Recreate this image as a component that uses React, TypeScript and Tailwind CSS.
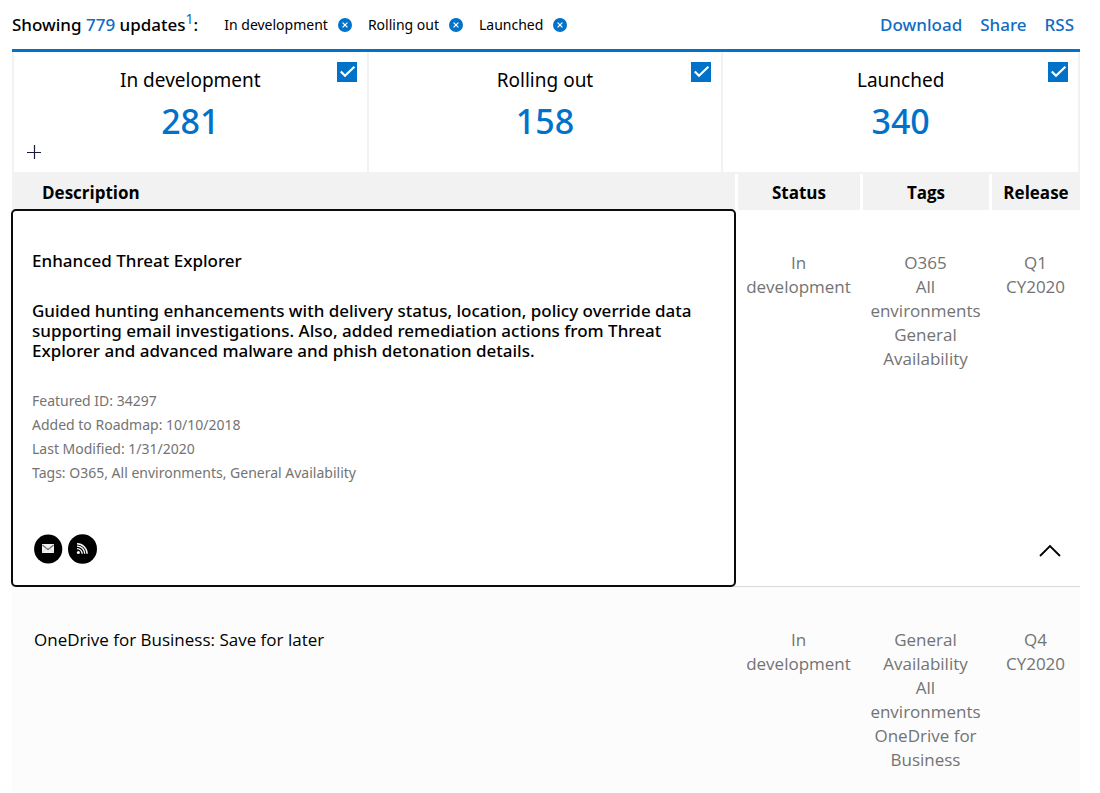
import { useState } from "react";

type Chip = { label: string; count: number; expandable?: boolean };

const statuses: Chip[] = [
  { label: "In development", count: 281, expandable: true },
  { label: "Rolling out", count: 158 },
  { label: "Launched", count: 340 },
];

function RemoveIcon() {
  return (
    <svg viewBox="0 0 14 14" className="size-3.5" aria-hidden="true">
      <circle cx="7" cy="7" r="7" fill="#0072c9" />
      <path d="M4.6 4.6 9.4 9.4M9.4 4.6 4.6 9.4" stroke="#fff" strokeWidth="1.3" />
    </svg>
  );
}

function MailIcon() {
  return (
    <svg viewBox="0 0 29 30" className="h-[30px] w-[29px]" aria-hidden="true">
      <ellipse cx="14.2" cy="15" rx="14.1" ry="14.4" fill="#000" />
      <rect x="8" y="10" width="12" height="9" fill="#f2f2f2" />
      <path d="m8.4 11 5.6 4.6 5.6-4.6" fill="none" stroke="#777" strokeWidth="1.3" />
      <path d="m8.4 18.6 3.6-4M19.6 18.6l-3.6-4" fill="none" stroke="#c4c4c4" strokeWidth=".6" />
    </svg>
  );
}

function FeedIcon() {
  return (
    <svg viewBox="0 0 29 30" className="h-[30px] w-[29px]" aria-hidden="true">
      <ellipse cx="14.5" cy="15" rx="14.5" ry="14.8" fill="#000" />
      <circle cx="10.4" cy="18.4" r="1.5" fill="#fff" />
      <path
        d="M9 14.6a5.2 5.2 0 0 1 5.2 5.2M9 12.1a7.7 7.7 0 0 1 7.7 7.7M9 9.7a10.1 10.1 0 0 1 10.1 10.1"
        fill="none"
        stroke="#fff"
        strokeWidth="1.4"
      />
    </svg>
  );
}

function StatusCard({ label, count, expandable }: Chip) {
  const [checked, setChecked] = useState(true);
  return (
    <div className="relative h-[120px] pt-4 text-center">
      <label className="block">
        <span className="font-['Noto_Sans','Open_Sans',sans-serif] text-[19px] leading-6">{label}</span>
        <input
          type="checkbox"
          checked={checked}
          onChange={() => setChecked(!checked)}
          className="absolute top-2.5 right-2.5 size-5 appearance-none border border-[#0072c9] checked:bg-[#0072c9]"
        />
        <svg
          viewBox="0 0 20 20"
          className="pointer-events-none absolute top-2.5 right-2.5 size-5"
          aria-hidden="true"
        >
          <path d="m3.8 9.4 4.2 4.4 9.4-9" fill="none" stroke="#fff" strokeWidth="2.2" />
        </svg>
      </label>
      <div className="mt-2 font-['Noto_Sans','Open_Sans',sans-serif] text-[34px] leading-10 font-medium text-[#0072c9]">
        {count}
      </div>
      {expandable && (
        <button type="button" aria-label="Expand" className="absolute bottom-3 left-3">
          <svg viewBox="0 0 16 16" className="size-4" aria-hidden="true">
            <path d="M1 8.5h14M8.5 1v14" stroke="#1a1a3a" strokeWidth="1.2" />
          </svg>
        </button>
      )}
    </div>
  );
}

function TagList({ tags }: { tags: string[] }) {
  return (
    <ul>
      {tags.map((t) => (
        <li key={t}>{t}</li>
      ))}
    </ul>
  );
}

const headCell = "border-l-[3px] border-white bg-[#f2f2f2] pt-0.5 text-center";
const infoCell =
  "pt-[41px] pr-[7px] pb-5 pl-[9px] align-top text-center text-[17px] leading-6 text-[#737373]";

export default function App() {
  return (
    <main className="min-h-screen bg-white pr-5 pl-3 font-['Open_Sans','Noto_Sans',sans-serif] text-black">
      <header className="flex h-[52px] items-center border-b-[3px] border-[#0072c9]">
        <h1 className="font-['Noto_Sans','Open_Sans',sans-serif] text-[17px] leading-6 font-medium">
          Showing <span className="text-[#0f6cc4]">779</span> updates
          <sup className="text-sm font-normal text-[#0f6cc4]">
            <a href="#note">1</a>
          </sup>
          :
        </h1>
        <ul className="ml-[26px] flex gap-4 font-['Noto_Sans','Open_Sans',sans-serif] text-sm">
          {statuses.map((s) => (
            <li key={s.label} className="flex items-center gap-2.5">
              {s.label}
              <button type="button" aria-label={"Remove " + s.label}>
                <RemoveIcon />
              </button>
            </li>
          ))}
        </ul>
        <nav className="mr-1.5 ml-auto flex gap-[18px] font-['Noto_Sans','Open_Sans',sans-serif] text-[17px] leading-6 font-medium text-[#0f6cc4]">
          <a href="#download">Download</a>
          <a href="#share">Share</a>
          <a href="#rss">RSS</a>
        </nav>
      </header>

      <section className="grid grid-cols-3 divide-x-2 divide-[#f2f2f2] border-x-2 border-b-2 border-[#f2f2f2]">
        {statuses.map((s) => (
          <StatusCard key={s.label} {...s} />
        ))}
      </section>

      <table className="w-full table-fixed border-separate border-spacing-0">
        <colgroup>
          <col />
          <col className="w-[125px]" />
          <col className="w-[129px]" />
          <col className="w-[91px]" />
        </colgroup>
        <thead>
          <tr className="h-9 text-[17px] leading-6 font-bold">
            <th scope="col" className="bg-[#f2f2f2] pt-0.5 pl-[30px] text-left">Description</th>
            <th scope="col" className={headCell}>Status</th>
            <th scope="col" className={headCell}>Tags</th>
            <th scope="col" className={headCell}>Release</th>
          </tr>
        </thead>
        <tbody>
          <tr>
            <td className="rounded-sm px-5 pt-[41px] pb-[22px] align-top outline-2 -outline-offset-1 outline-[#0b0b0b]">
              <h2 className="font-['Noto_Sans','Open_Sans',sans-serif] text-[17px] leading-5 font-medium">
                Enhanced Threat Explorer
              </h2>
              <p className="mt-[30px] font-['Noto_Sans','Open_Sans',sans-serif] text-[17px] leading-5 font-medium">
                Guided hunting enhancements with delivery status, location, policy override data
                supporting email investigations. Also, added remediation actions from Threat Explorer
                and advanced malware and phish detonation details.
              </p>
              <div className="mt-7 font-['Noto_Sans','Open_Sans',sans-serif] text-sm leading-6 text-[#737373]">
                <p>Featured ID: 34297</p>
                <p>Added to Roadmap: 10/10/2018</p>
                <p>Last Modified: 1/31/2020</p>
                <p>Tags: O365, All environments, General Availability</p>
              </div>
              <div className="mt-[49px] ml-0.5 flex gap-[5px]">
                <a href="#email" aria-label="Email">
                  <MailIcon />
                </a>
                <a href="#feed" aria-label="RSS feed">
                  <FeedIcon />
                </a>
              </div>
            </td>
            <td className={infoCell}>In development</td>
            <td className={infoCell}>
              <TagList tags={["O365", "All environments", "General Availability"]} />
            </td>
            <td className={infoCell + " h-px"}>
              <div className="flex h-full flex-col justify-between">
                <span>Q1 CY2020</span>
                <button type="button" aria-label="Collapse" className="mr-3 self-end">
                  <svg viewBox="0 0 22 30" className="h-[30px] w-[22px]" aria-hidden="true">
                    <path d="m1 20 10-10 10 10" fill="none" stroke="#000" strokeWidth="1.8" />
                  </svg>
                </button>
              </div>
            </td>
          </tr>
          <tr className="h-[207px] bg-[#fcfcfc]">
            <td className="border-t border-[#d9d9d9] px-[22px] pt-[41px] align-top text-[17px] leading-6">
              OneDrive for Business: Save for later
            </td>
            <td className={infoCell + " border-t border-[#d9d9d9]"}>In development</td>
            <td className={infoCell + " border-t border-[#d9d9d9]"}>
              <TagList tags={["General Availability", "All environments", "OneDrive for Business"]} />
            </td>
            <td className={infoCell + " border-t border-[#d9d9d9]"}>Q4 CY2020</td>
          </tr>
        </tbody>
      </table>
    </main>
  );
}
